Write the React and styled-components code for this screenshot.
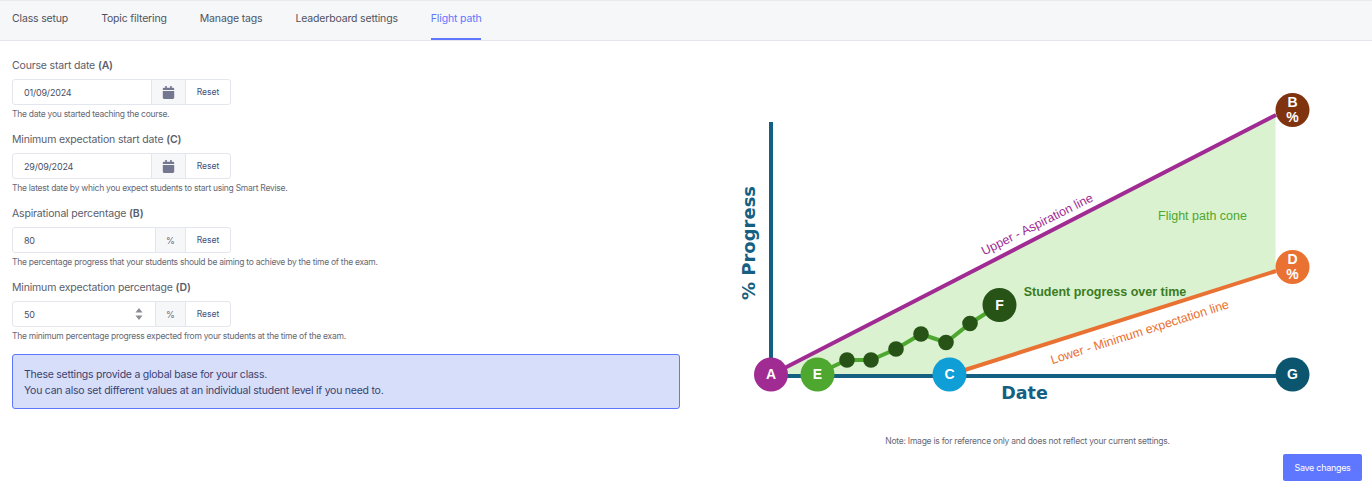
import styled, { createGlobalStyle } from "styled-components";
import { FaCalendar } from "react-icons/fa";

const GlobalStyle = createGlobalStyle`
    * { box-sizing: border-box; }
    body {
        margin: 0;
        background: #FFFFFF;
        font-family: Inter, "Noto Sans", sans-serif;
        color: #4b4f63;
    }
`

const tabs = ["Class setup", "Topic filtering", "Manage tags", "Leaderboard settings", "Flight path"]

const fields = [
    { label: "Course start date", letter: "A", value: "01/09/2024", help: "The date you started teaching the course.", kind: "date" },
    { label: "Minimum expectation start date", letter: "C", value: "29/09/2024", help: "The latest date by which you expect students to start using Smart Revise.", kind: "date" },
    { label: "Aspirational percentage", letter: "B", value: "80", help: "The percentage progress that your students should be aiming to achieve by the time of the exam.", kind: "percent" },
    { label: "Minimum expectation percentage", letter: "D", value: "50", help: "The minimum percentage progress expected from your students at the time of the exam.", kind: "percent", stepper: true },
]

const steps = [[847, 360], [871, 360], [896, 349], [921, 334], [946, 342.5], [970, 323.5]]

function Field({ field }) {
    return (
        <FieldBox>
            <Label>{field.label} <b>({field.letter})</b></Label>
            <InputGroup>
                <InputWrap>
                    <ValueInput readOnly value={field.value} />
                    {field.stepper && (
                        <Stepper width="8" height="14" viewBox="0 0 8 14">
                            <path d="M4 1 L7.5 5.5 H0.5 Z M4 13 L0.5 8.5 H7.5 Z" fill="#8a8c94" />
                        </Stepper>
                    )}
                </InputWrap>
                {field.kind === "date"
                    ? <Addon $w={34}><FaCalendar size={13} color="#747790" /></Addon>
                    : <Addon $w={30}>%</Addon>}
                <ResetButton>Reset</ResetButton>
            </InputGroup>
            <Help>{field.help}</Help>
        </FieldBox>
    )
}

function Marker({ x, y, fill, letter, percent, r = 17 }) {
    return (
        <g>
            <circle cx={x} cy={y} r={r} fill={fill} />
            {percent ? (
                <>
                    <MarkerText x={x} y={y - 3}>{letter}</MarkerText>
                    <MarkerText x={x} y={y + 12}>%</MarkerText>
                </>
            ) : (
                <MarkerText x={x} y={y + 4.5}>{letter}</MarkerText>
            )}
        </g>
    )
}

function FlightChart() {
    return (
        <ChartSvg viewBox="700 80 620 340" width="620" height="340">
            <polygon points="771,375 1275.5,115 1275.5,271 949,375" fill="#DAF2D0" />
            <line x1="771" y1="122" x2="771" y2="376" stroke="#156082" strokeWidth="4" />
            <line x1="771" y1="376" x2="1293" y2="376" stroke="#156082" strokeWidth="4" />
            <line x1="771" y1="375" x2="1276" y2="115" stroke="#A02B93" strokeWidth="4" />
            <line x1="949" y1="375" x2="1276" y2="271" stroke="#E97132" strokeWidth="4" />
            <polyline
                points={"817,374 " + steps.map((p) => p.join(",")).join(" ") + " 999,305"}
                fill="none"
                stroke="#4EA72E"
                strokeWidth="4"
            />
            {steps.map(([x, y]) => <circle key={x} cx={x} cy={y} r="7.8" fill="#275317" />)}
            <Marker x={771} y={374.5} fill="#A02B93" letter="A" />
            <Marker x={817.5} y={374.5} fill="#4EA72E" letter="E" />
            <Marker x={949.5} y={374.5} fill="#0F9ED5" letter="C" />
            <Marker x={999.5} y={305} fill="#275317" letter="F" />
            <Marker x={1292.5} y={110} fill="#7F340F" letter="B" percent />
            <Marker x={1292.5} y={267} fill="#E97132" letter="D" percent />
            <Marker x={1292.5} y={374.5} fill="#0B556F" letter="G" />
            <AxisText x="1024.5" y="399" textAnchor="middle" fontSize="17.5">Date</AxisText>
            <AxisText x="755" y="243" textAnchor="middle" fontSize="18" transform="rotate(-90 755 243)">% Progress</AxisText>
            <LineText x="1039" y="228" fill="#A02B93" transform="rotate(-26.5 1039 228)">Upper - Aspiration line</LineText>
            <LineText x="1141" y="336" fill="#E97132" transform="rotate(-17.6 1141 336)">Lower - Minimum expectation line</LineText>
            <LineText x="1202.5" y="220" fill="#4EA72E">Flight path cone</LineText>
            <LineText x="1105" y="296" fill="#3A7C22" $bold>Student progress over time</LineText>
        </ChartSvg>
    )
}

export default function App() {
    return (
        <Page>
            <GlobalStyle />
            <TabBar>
                {tabs.map((tab) => (
                    <Tab key={tab} $active={tab === "Flight path"}>{tab}</Tab>
                ))}
            </TabBar>
            <Content>
                <FormColumn>
                    {fields.map((field) => <Field key={field.label} field={field} />)}
                    <Notice>
                        These settings provide a global base for your class.<br />
                        You can also set different values at an individual student level if you need to.
                    </Notice>
                </FormColumn>
                <ChartColumn>
                    <FlightChart />
                    <ChartNote>Note: Image is for reference only and does not reflect your current settings.</ChartNote>
                    <SaveButton>Save changes</SaveButton>
                </ChartColumn>
            </Content>
        </Page>
    )
}

const Page = styled.div`
    width: 1372px;
    height: 491px;
    overflow: hidden;
`
const TabBar = styled.div`
    height: 41px;
    display: flex;
    gap: 33px;
    padding: 0 12px;
    background: #F6F7F9;
    border-top: 1px solid #E9EAEE;
    border-bottom: 1px solid #E4E6EB;
`
const Tab = styled.div`
    height: 39px;
    line-height: 35px;
    font-size: 10.5px;
    letter-spacing: -0.16px;
    color: ${(props) => props.$active ? "#5F76FF" : "#50535f"};
    border-bottom: 2px solid ${(props) => props.$active ? "#5F76FF" : "transparent"};
`
const Content = styled.div`
    display: flex;
`
const FormColumn = styled.div`
    width: 668px;
    margin-left: 12px;
    padding-top: 17px;
    display: flex;
    flex-direction: column;
`
const FieldBox = styled.div`
    height: 74px;
`
const Label = styled.div`
    font-size: 10.5px;
    line-height: 15px;
    letter-spacing: -0.17px;
    color: #5a5d6b;
    margin-bottom: 6px;
    b { font-weight: 600; }
`
const InputGroup = styled.div`
    width: 219px;
    height: 26px;
    display: flex;
    background: #FFFFFF;
    border: 1px solid #E4E6EE;
    border-radius: 3px;
`
const InputWrap = styled.div`
    flex: 1;
    position: relative;
    min-width: 0;
`
const ValueInput = styled.input`
    width: 100%;
    height: 100%;
    border: none;
    outline: none;
    background: transparent;
    padding: 0 11px;
    font-family: inherit;
    font-size: 9px;
    letter-spacing: -0.2px;
    color: #4b4f63;
`
const Stepper = styled.svg`
    position: absolute;
    right: 12px;
    top: 5px;
`
const Addon = styled.div`
    width: ${(props) => props.$w}px;
    display: flex;
    align-items: center;
    justify-content: center;
    background: #F6F7F9;
    border-left: 1px solid #E4E6EE;
    font-size: 9px;
    color: #6b6e7c;
`
const ResetButton = styled.div`
    width: 45px;
    display: flex;
    align-items: center;
    justify-content: center;
    border-left: 1px solid #E4E6EE;
    font-size: 8.5px;
    color: #40507c;
`
const Help = styled.div`
    margin-top: 3px;
    font-size: 8.5px;
    line-height: 13px;
    letter-spacing: -0.26px;
    color: #666975;
`
const Notice = styled.div`
    height: 55px;
    margin-top: 0;
    padding: 12px 11px;
    background: #D7DEF9;
    border: 1px solid #5F76FF;
    border-radius: 3px;
    font-size: 10.5px;
    line-height: 15.5px;
    letter-spacing: -0.24px;
    color: #3a4270;
`
const ChartColumn = styled.div`
    flex: 1;
    position: relative;
    padding-top: 39px;
    padding-left: 20px;
`
const ChartSvg = styled.svg`
    display: block;
`
const MarkerText = styled.text`
    font-family: "Liberation Sans", Arial, sans-serif;
    font-size: 14px;
    font-weight: 700;
    fill: #FFFFFF;
    text-anchor: middle;
`
const AxisText = styled.text`
    font-family: "DejaVu Sans", sans-serif;
    font-weight: 700;
    fill: #156082;
`
const LineText = styled.text`
    font-family: "Liberation Sans", Arial, sans-serif;
    font-size: 12.5px;
    font-weight: ${(props) => props.$bold ? 700 : 400};
    text-anchor: middle;
`
const ChartNote = styled.div`
    width: 655px;
    margin-top: 15px;
    text-align: center;
    font-size: 8.5px;
    line-height: 13px;
    letter-spacing: -0.24px;
    color: #666975;
`
const SaveButton = styled.div`
    width: 79px;
    height: 27px;
    margin: 6px 0 0 583px;
    display: flex;
    align-items: center;
    justify-content: center;
    background: #5F76FF;
    border-radius: 2px;
    font-size: 9px;
    letter-spacing: -0.3px;
    color: #FFFFFF;
`
